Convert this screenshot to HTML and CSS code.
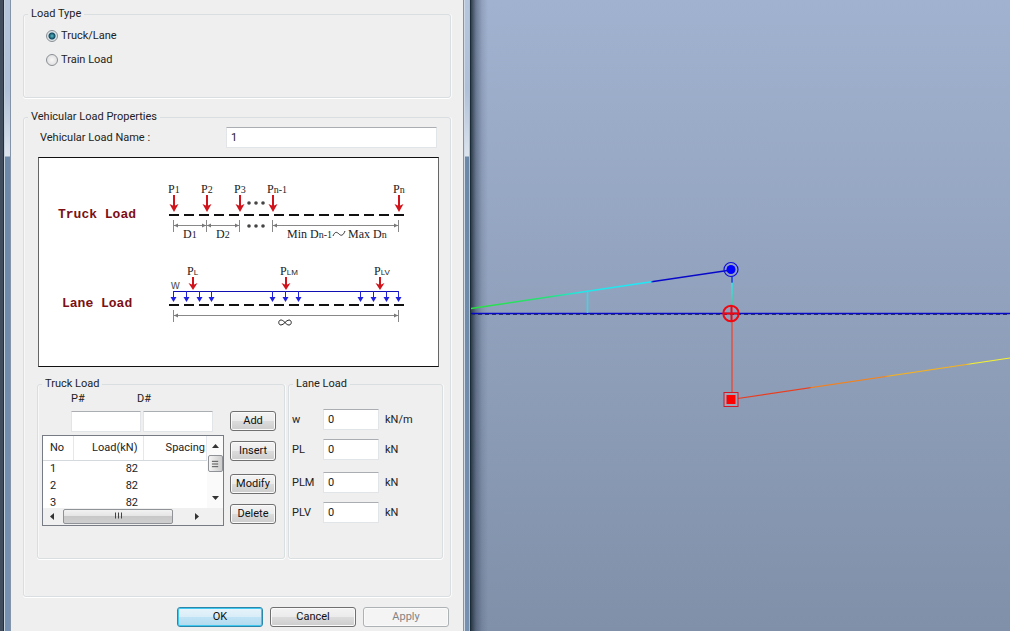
FILE: index.html
```html
<!DOCTYPE html>
<html lang="en">
<head>
<meta charset="utf-8">
<title>Vehicular Load</title>
<link rel="stylesheet" href="styles.css">
</head>
<body>
<div class="frame frame-left"></div>
<form class="dialog">
  <fieldset class="group load-type">
    <legend>Load Type</legend>
    <label class="choice"><input type="radio" name="type" checked>Truck/Lane</label>
    <label class="choice"><input type="radio" name="type">Train Load</label>
  </fieldset>
  <fieldset class="group properties">
    <legend>Vehicular Load Properties</legend>
    <div class="name-row">
      <label for="name">Vehicular Load Name :</label>
      <input class="field" id="name" type="text" value="1">
    </div>
    <svg class="diagram" viewBox="39 158 399 208" role="img" aria-label="Load diagram">
      <defs>
        <g id="force"><path d="M0 0V12" stroke="#d0141c" stroke-width="2"/><path d="M-4.500 9L0 17L4.500 9L0 11Z" fill="#d0141c"/></g>
        <g id="short"><path d="M0 0V8" stroke="#d0141c" stroke-width="2"/><path d="M-4.500 6L0 13L4.500 6L0 8Z" fill="#d0141c"/></g>
        <g id="dist"><path d="M0 0V8" stroke="#2020e0"/><path d="M-3 6H3L0 11Z" fill="#2020e0"/></g>
        <g id="dots" fill="#444"><circle cx="0" cy="0" r="1.800"/><circle cx="7" cy="0" r="1.800"/><circle cx="14" cy="0" r="1.800"/></g>
        <path id="tip" d="M0 0L4 -2V2Z" fill="#777"/>
      </defs>
      <g class="caption"><text x="58" y="218">Truck Load</text><text x="62" y="307">Lane Load</text></g>
      <g class="mark">
        <text x="168" y="193">P<tspan class="sub">1</tspan></text>
        <text x="201" y="193">P<tspan class="sub">2</tspan></text>
        <text x="234" y="193">P<tspan class="sub">3</tspan></text>
        <text x="267" y="193">P<tspan class="sub">n-1</tspan></text>
        <text x="393" y="193">P<tspan class="sub">n</tspan></text>
        <text x="183" y="238">D<tspan class="sub">1</tspan></text>
        <text x="216" y="238">D<tspan class="sub">2</tspan></text>
        <text x="287" y="238">Min D<tspan class="sub">n-1</tspan></text>
        <text x="348" y="238">Max D<tspan class="sub">n</tspan></text>
        <text x="187" y="275">P<tspan class="small">L</tspan></text>
        <text x="280" y="275">P<tspan class="small">LM</tspan></text>
        <text x="374" y="275">P<tspan class="small">LV</tspan></text>
      </g>
      <text class="w" x="171" y="289">w</text>
      <path d="M333 236C335 231 337 232 339 234S343 236 345 231" fill="none" stroke="#333"/>
      <use href="#force" x="174" y="195"/><use href="#force" x="207" y="195"/><use href="#force" x="240" y="195"/><use href="#force" x="273" y="195"/><use href="#force" x="399" y="195"/>
      <use href="#dots" x="249" y="203"/><use href="#dots" x="249" y="226"/>
      <path d="M169 215H404M169 305H404" stroke="#111" stroke-width="2" stroke-dasharray="10 5"/>
      <g stroke="#888" fill="none">
        <path d="M173.500 220V232M206.500 220V232M239.500 220V232M272.500 220V232M398.500 220V232M173 225.500H239M273 225.500H398"/>
        <path d="M173.500 310V322M398.500 310V322M173 315.500H398"/>
      </g>
      <use href="#tip" x="174" y="225.500"/><use href="#tip" x="207" y="225.500"/><use href="#tip" x="273" y="225.500"/><use href="#tip" x="174" y="315.500"/>
      <path d="M206 225.500L202 223.500V227.500ZM239 225.500L235 223.500V227.500ZM398 225.500L394 223.500V227.500ZM398 315.500L394 313.500V317.500Z" fill="#777"/>
      <use href="#short" x="193" y="277"/><use href="#short" x="286" y="277"/><use href="#short" x="380" y="277"/>
      <path d="M173 291.500H398" stroke="#1010b0"/>
      <use href="#dist" x="173.500" y="291"/><use href="#dist" x="186.500" y="291"/><use href="#dist" x="199.500" y="291"/><use href="#dist" x="211.500" y="291"/>
      <use href="#dist" x="272.500" y="291"/><use href="#dist" x="285.500" y="291"/><use href="#dist" x="298.500" y="291"/>
      <use href="#dist" x="360.500" y="291"/><use href="#dist" x="373.500" y="291"/><use href="#dist" x="386.500" y="291"/><use href="#dist" x="398.500" y="291"/>
      <path d="M285 322.500C283 320.500 282 320 281 320C278 320 278 325 281 325C284 325 286 320 289 320C292 320 292 325 289 325C287.500 325 287 324.500 285 322.500Z" fill="none" stroke="#222"/>
    </svg>
    <div class="tables">
      <fieldset class="group truck">
        <legend>Truck Load</legend>
        <div class="truck-body">
          <div class="entry">
            <div class="pair">
              <label class="stack">P#<input class="field" type="text"></label>
              <label class="stack">D#<input class="field" type="text"></label>
            </div>
            <div class="list">
              <div class="rows">
                <table>
                  <thead><tr><th class="no">No</th><th class="load">Load(kN)</th><th>Spacing</th></tr></thead>
                  <tbody>
                    <tr><td>1</td><td>82</td><td></td></tr>
                    <tr><td>2</td><td>82</td><td></td></tr>
                    <tr><td>3</td><td>82</td><td></td></tr>
                  </tbody>
                </table>
              </div>
              <div class="vbar">
                <svg class="arrow" viewBox="0 0 7 4"><path d="M0 4L3.500 0L7 4Z"/></svg>
                <div class="vthumb"><svg viewBox="0 0 8 9"><path d="M0 1.500H7M0 4.500H7M0 7.500H7"/></svg></div>
                <svg class="arrow last" viewBox="0 0 7 4"><path d="M0 0L3.500 4L7 0Z"/></svg>
              </div>
              <div class="hbar">
                <svg class="side" viewBox="0 0 4 7"><path d="M4 0L0 3.500L4 7Z"/></svg>
                <div class="hthumb"><svg viewBox="0 0 9 7"><path d="M1.500 0V6M4.500 0V6M7.500 0V6"/></svg></div>
                <svg class="side" viewBox="0 0 4 7"><path d="M0 0L4 3.500L0 7Z"/></svg>
              </div>
            </div>
          </div>
          <div class="actions">
            <div class="two"><button type="button">Add</button><button type="button">Insert</button></div>
            <div class="two"><button type="button">Modify</button><button type="button">Delete</button></div>
          </div>
        </div>
      </fieldset>
      <fieldset class="group lane">
        <legend>Lane Load</legend>
        <div class="lane-body">
          <div class="two">
            <div class="lane-row"><label for="w">w</label><input class="field" id="w" type="text" value="0"><span>kN/m</span></div>
            <div class="lane-row"><label for="pl">PL</label><input class="field" id="pl" type="text" value="0"><span>kN</span></div>
          </div>
          <div class="two">
            <div class="lane-row"><label for="plm">PLM</label><input class="field" id="plm" type="text" value="0"><span>kN</span></div>
            <div class="lane-row"><label for="plv">PLV</label><input class="field" id="plv" type="text" value="0"><span>kN</span></div>
          </div>
        </div>
      </fieldset>
    </div>
  </fieldset>
  <div class="footer">
    <button class="ok" type="button">OK</button>
    <button type="button">Cancel</button>
    <button type="button" disabled>Apply</button>
  </div>
</form>
<div class="frame frame-right"></div>
<main class="view">
  <svg class="plot" viewBox="471 0 539 631" preserveAspectRatio="xMinYMin slice" role="img" aria-label="Model view">
    <defs>
      <linearGradient id="up" gradientUnits="userSpaceOnUse" x1="471" y1="0" x2="731" y2="0">
        <stop offset="0" stop-color="#28e040"/><stop offset=".3" stop-color="#28e078"/><stop offset=".42" stop-color="#20e8e8"/><stop offset=".69" stop-color="#20e8f8"/><stop offset=".7" stop-color="#0808c8"/><stop offset="1" stop-color="#0808c8"/>
      </linearGradient>
      <linearGradient id="down" gradientUnits="userSpaceOnUse" x1="731" y1="0" x2="1010" y2="0">
        <stop offset="0" stop-color="#e83c20"/><stop offset=".28" stop-color="#e84020"/><stop offset=".29" stop-color="#f08020"/><stop offset=".55" stop-color="#f08420"/><stop offset=".57" stop-color="#f4b020"/><stop offset=".84" stop-color="#f4b020"/><stop offset=".86" stop-color="#f4f030"/><stop offset="1" stop-color="#f4f030"/>
      </linearGradient>
      <linearGradient id="drop" gradientUnits="userSpaceOnUse" x1="0" y1="276" x2="0" y2="306">
        <stop offset="0" stop-color="#1040d8"/><stop offset=".2" stop-color="#1040d8"/><stop offset=".25" stop-color="#30e8e8"/><stop offset=".6" stop-color="#40d8c8"/><stop offset="1" stop-color="#48c898"/>
      </linearGradient>
    </defs>
    <path d="M471 313.500H1010" stroke="#0808c8" stroke-width="1.500"/>
    <path d="M471 314.500H1010" stroke="#28306c" stroke-dasharray="4 3"/>
    <path d="M471 308.500L731 270" stroke="url(#up)" stroke-width="1.300" fill="none"/>
    <path d="M587.500 291V313" stroke="#28e0ec" stroke-width="1.500"/>
    <path d="M732 276L732.010 306" stroke="url(#drop)" stroke-width="1.500"/>
    <path d="M732 321V393" stroke="#e05040" stroke-width="1.500"/>
    <path d="M731 399.500L1010 358" stroke="url(#down)" stroke-width="1.200"/>
    <circle cx="731" cy="269.500" r="7" fill="none" stroke="#1010d8" stroke-width="1.200"/><circle cx="731" cy="269.500" r="4.500" fill="#0000ff"/>
    <circle cx="731" cy="313.500" r="7.700" fill="none" stroke="#f00810" stroke-width="2"/><path d="M731.500 306V321M723 313.500H739" stroke="#f00810" stroke-width="2"/>
    <rect x="724" y="392.500" width="14" height="14" fill="#9fa4b8" stroke="#d01828"/><rect x="726.500" y="395" width="9" height="9" fill="#ff0000"/>
  </svg>
</main>
</body>
</html>
```
FILE: styles.css
```css
* { box-sizing: border-box; }
body {
  margin: 0;
  min-height: 100vh;
  display: flex;
  overflow: hidden;
  background: #8e9eb9;
  color: #222;
  font: 11px/14px Roboto, "Liberation Sans", sans-serif;
}
.frame {
  flex: none;
  background: linear-gradient(to bottom, #b6c6dc 0, #b0c0d8 90px, #dce4ee 156px, #6c88a8 157px, #7590b0 100%);
}
.frame-left { width: 11px; border-left: 3px solid #414d5c; box-shadow: inset 1px 0 #20303e, inset 2px 0 #c4d0dc, inset -1px 0 #8494a8; }
.frame-right { width: 8px; box-shadow: inset 1px 0 #8494a8, inset 2px 0 #d0dae6, inset -1px 0 #1c2c36, inset -2px 0 #a8c0d8; }
.dialog {
  flex: none;
  width: 452px;
  padding: 7px 12px 4px;
  background: #efefef;
}
.group {
  min-width: 0;
  margin: 0;
  padding: 0;
  border: 1px solid #d9dee1;
  border-radius: 3px;
  box-shadow: inset 1px 0 #f8f8f8, 0 1px #fff, 1px 0 #fafafa;
}
legend { margin-left: 4px; padding: 0 3px; line-height: 14px; }
.load-type { padding: 3px 0 25px; }
.choice { display: flex; align-items: center; gap: 3px; height: 24px; padding-left: 22px; }
.choice input {
  appearance: none;
  width: 12px;
  height: 12px;
  margin: 0;
  border: 1px solid #8a8f94;
  border-radius: 50%;
  background: radial-gradient(#f8f8f8, #d8d8d8);
}
.choice input:checked { background: radial-gradient(circle, #58c0c8 0, #104860 3px, #dce4e8 4px); }
.properties { margin-top: 12px; padding: 3px 7px 37px 0; }
.name-row { display: flex; align-items: center; margin-right: 6px; padding-left: 16px; }
.name-row label { width: 186px; }
.name-row .field { flex: 1; }
.field {
  min-width: 0;
  height: 21px;
  padding: 0 4px;
  border: 1px solid #e2e5e8;
  border-top-color: #aaadb2;
  border-radius: 1px;
  background: #fff;
  color: #222;
  font: inherit;
}
.diagram {
  display: block;
  width: 401px;
  height: 210px;
  margin: 9px 0 10px 14px;
  border: 1px solid #111;
  border-left-color: #666;
  border-right-color: #666;
  background: #fff;
}
.caption { fill: #7c1014; font: bold 13px "Liberation Mono", monospace; }
.mark { fill: #222; font: 12px "Liberation Serif", serif; }
.sub { font-size: 10px; }
.small { font: 8px "Liberation Sans", sans-serif; }
.w { fill: #555; font: 12px "Liberation Sans", sans-serif; }
.tables { display: grid; grid-template-columns: 248px 1fr; gap: 3px; padding-left: 13px; }
.truck { padding-bottom: 32px; }
.truck-body { display: flex; gap: 6px; padding-left: 4px; }
.entry { width: 182px; }
.pair { display: flex; gap: 2px; padding: 1px 10px 3px 29px; }
.stack { display: flex; flex-direction: column; gap: 5px; width: 70px; text-indent: 0; }
.stack + .stack { text-indent: -6px; }
.list {
  display: grid;
  grid-template-columns: 1fr 16px;
  grid-template-rows: 72px 17px;
  border: 1px solid #777c84;
  background: #fff;
}
.rows { overflow: hidden; }
table { width: 164px; table-layout: fixed; border-collapse: collapse; }
th, td { height: 17px; padding: 0 5px; line-height: 16px; text-align: right; font-weight: normal; }
th { height: 24px; padding-right: 1px; border-right: 1px solid #e4e8ec; border-bottom: 1px solid #d5d8dc; }
.no { width: 30px; }
.load { width: 70px; padding-right: 5px; }
th:first-child, td:first-child { text-align: left; padding-left: 7px; }
.vbar { display: flex; flex-direction: column; align-items: center; padding: 8px 0 8px; background: #fafafa; }
.arrow { width: 7px; height: 4px; fill: #333; }
.last { margin-top: auto; }
.vthumb, .hthumb {
  display: flex;
  align-items: center;
  justify-content: center;
  border: 1px solid #8f9296;
  border-radius: 2px;
  background: linear-gradient(to bottom, #f2f2f2 0, #e4e4e4 50%, #c8c8c8 50%, #cfcfcf 100%);
}
.vthumb { width: 15px; height: 17px; margin-top: 7px; background: linear-gradient(to right, #f4f4f4, #ccc); }
.vthumb svg, .hthumb svg { width: 9px; height: 8px; stroke: #444; }
.hbar { grid-column: 1 / 3; display: flex; align-items: center; padding: 0 24px 1px 7px; background: #f0f0f0; }
.hthumb { width: 110px; height: 15px; margin: 0 auto 0 9px; }
.side { width: 4px; height: 7px; fill: #333; }
button {
  height: 20px;
  padding: 0;
  border: 1px solid #707070;
  border-radius: 3px;
  background: linear-gradient(to bottom, #f3f3f3 0, #ebebeb 50%, #dcdcdc 50%, #cdcdcd 100%);
  box-shadow: inset 0 0 0 1px #fafafa;
  color: #111;
  font: inherit;
}
.actions { display: flex; flex-direction: column; gap: 13px; width: 46px; padding-top: 20px; }
.two { display: flex; flex-direction: column; gap: 10px; }
.lane-body { display: flex; flex-direction: column; gap: 12px; padding: 18px 0 0 3px; }
.lane-body .two { gap: 9px; }
.lane-row { display: grid; grid-template-columns: 31px 56px 1fr; align-items: center; }
.lane-row span { padding-left: 6px; }
.footer { display: flex; justify-content: flex-end; gap: 7px; margin: 10px 2px 0; }
.footer button { width: 86px; }
.footer .ok { border-color: #2c86aa; background: linear-gradient(to bottom, #e8f4fa 0, #d8edf8 50%, #c0e4f6 50%, #b4daee 100%); box-shadow: inset 0 0 0 1px #40c8f0; }
.footer button:disabled { border-color: #adb2b5; background: #f4f4f4; color: #838383; }
.view {
  flex: 1;
  min-width: 0;
  background:
    linear-gradient(to right, rgba(20, 34, 44, .8) 0, rgba(30, 42, 62, .4) 5px, rgba(30, 42, 62, .12) 11px, transparent 17px),
    linear-gradient(to bottom, #a1b2d0, #8090a9);
}
.plot { display: block; width: 100%; height: 100vh; }
```
